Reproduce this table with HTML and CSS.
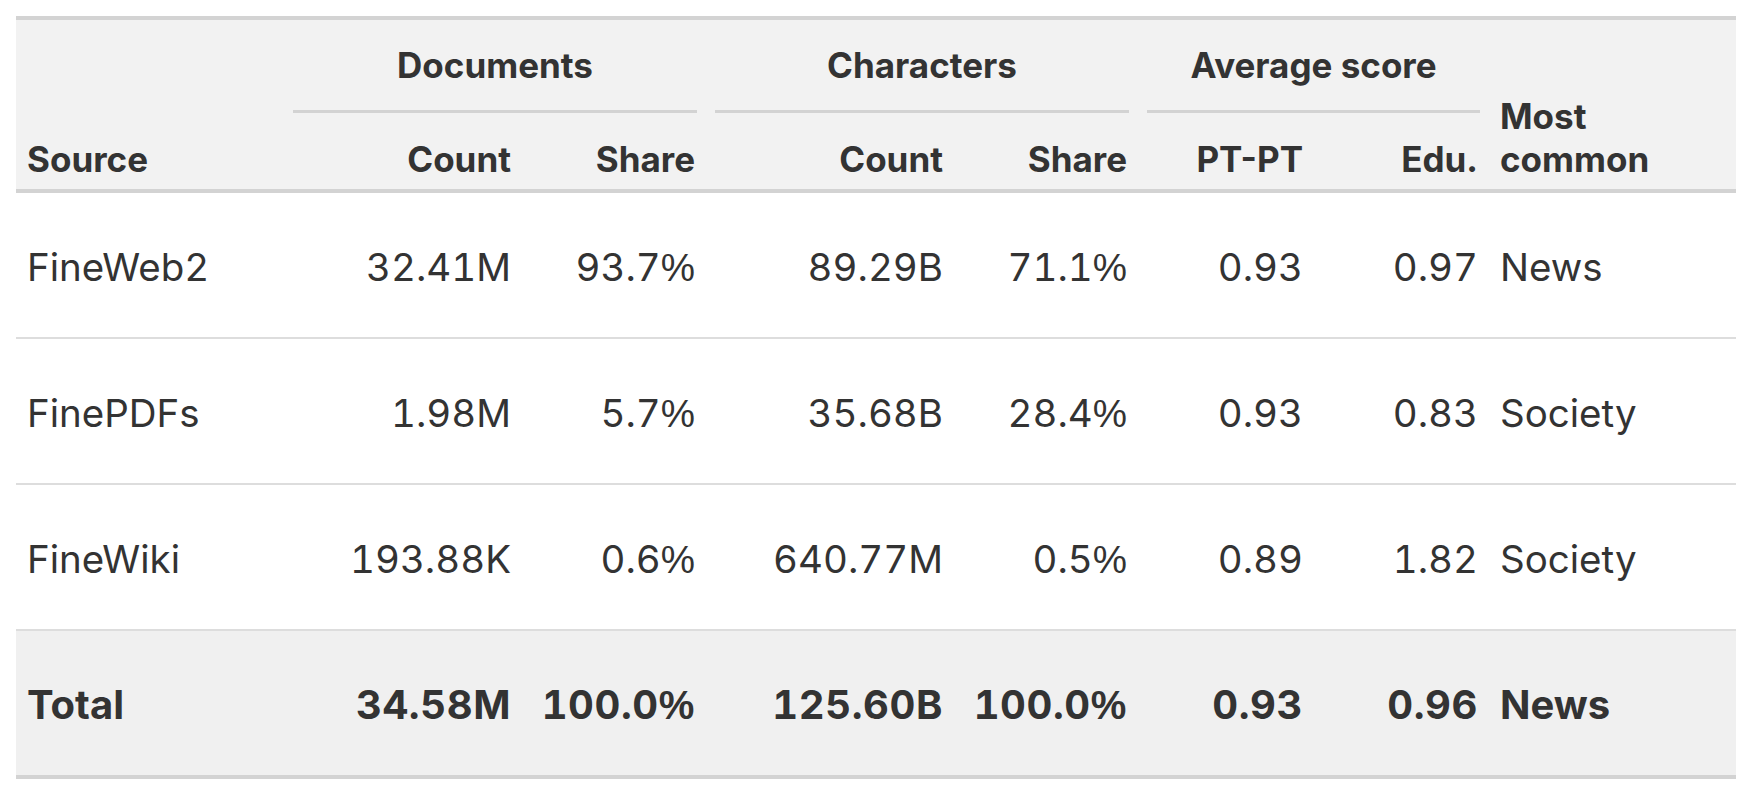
FILE: index.html
```html
<!DOCTYPE html>
<html lang="en">
<head>
<meta charset="utf-8">
<title>Dataset sources</title>
<link rel="stylesheet" href="styles.css">
</head>
<body>
<table class="stats">
  <colgroup>
    <col class="c-src">
    <col class="c-dcount">
    <col class="c-dshare">
    <col class="c-ccount">
    <col class="c-cshare">
    <col class="c-pt">
    <col class="c-edu">
    <col class="c-common">
  </colgroup>
  <thead>
    <tr class="groups">
      <th class="src" rowspan="2">Source</th>
      <th class="grp" colspan="2"><div class="grp-label">Documents</div></th>
      <th class="grp" colspan="2"><div class="grp-label">Characters</div></th>
      <th class="grp" colspan="2"><div class="grp-label">Average score</div></th>
      <th class="common" rowspan="2">Most<br>common</th>
    </tr>
    <tr class="subs">
      <th class="num">Count</th>
      <th class="num">Share</th>
      <th class="num">Count</th>
      <th class="num">Share</th>
      <th class="num">PT-PT</th>
      <th class="num">Edu.</th>
    </tr>
  </thead>
  <tbody>
    <tr>
      <td class="name">FineWeb2</td>
      <td class="num">32.41M</td>
      <td class="num">93.7<span class="pct">%</span></td>
      <td class="num">89.29B</td>
      <td class="num">71.1<span class="pct">%</span></td>
      <td class="num">0.93</td>
      <td class="num">0.97</td>
      <td class="txt">News</td>
    </tr>
    <tr>
      <td class="name">FinePDFs</td>
      <td class="num">1.98M</td>
      <td class="num">5.7<span class="pct">%</span></td>
      <td class="num">35.68B</td>
      <td class="num">28.4<span class="pct">%</span></td>
      <td class="num">0.93</td>
      <td class="num">0.83</td>
      <td class="txt">Society</td>
    </tr>
    <tr>
      <td class="name">FineWiki</td>
      <td class="num">193.88K</td>
      <td class="num">0.6<span class="pct">%</span></td>
      <td class="num">640.77M</td>
      <td class="num">0.5<span class="pct">%</span></td>
      <td class="num">0.89</td>
      <td class="num">1.82</td>
      <td class="txt">Society</td>
    </tr>
  </tbody>
  <tfoot>
    <tr class="total">
      <td class="name">Total</td>
      <td class="num">34.58M</td>
      <td class="num">100.0<span class="pct">%</span></td>
      <td class="num">125.60B</td>
      <td class="num">100.0<span class="pct">%</span></td>
      <td class="num">0.93</td>
      <td class="num">0.96</td>
      <td class="txt">News</td>
    </tr>
  </tfoot>
</table>
</body>
</html>
```

FILE: styles.css
```css
html, body {
  background: #ffffff;
}

body {
  margin: 16px;
  font-family: Inter, "Liberation Sans", Arial, sans-serif;
  color: #333333;
}

.stats {
  width: 100%;
  border-collapse: collapse;
  table-layout: fixed;
}

.c-src { width: 268px; }
.c-dcount { width: 238px; }
.c-dshare { width: 184px; }
.c-ccount { width: 248px; }
.c-cshare { width: 184px; }
.c-pt { width: 176px; }
.c-edu { width: 175px; }
.c-common { width: 247px; }

.stats thead {
  background: #f2f2f2;
  border-top: 4px solid #d3d3d3;
  border-bottom: 4px solid #d3d3d3;
}

.stats th {
  font-size: 35px;
  font-weight: 700;
  line-height: 42px;
  padding: 0 11px;
  white-space: nowrap;
}

.stats th.src,
.stats th.common {
  text-align: left;
  vertical-align: bottom;
  padding-bottom: 9px;
}

.stats th.common {
  line-height: 43px;
  padding-bottom: 8px;
}

.stats th.grp {
  text-align: center;
  vertical-align: top;
  padding-top: 24px;
  padding-bottom: 2px;
}

.grp-label {
  padding-bottom: 24px;
  margin: 0 -2px;
  border-bottom: 3px solid #d3d3d3;
}

.subs th {
  padding-top: 23px;
  padding-bottom: 9px;
}

.stats th.num {
  text-align: right;
}

.stats td {
  font-size: 38.5px;
  height: 141px;
  padding: 3px 11px 0;
  vertical-align: middle;
  white-space: nowrap;
  font-variant-numeric: tabular-nums;
  border-bottom: 2px solid #dddddd;
}

.stats td.name,
.stats td.txt {
  text-align: left;
}

.stats td.num {
  text-align: right;
}

.pct {
  font-family: "Liberation Sans", Arial, sans-serif;
}

.stats tfoot {
  background: #f0f0f0;
  border-top: 2px solid #d3d3d3;
  border-bottom: 4px solid #d3d3d3;
}

.stats tfoot td {
  font-size: 40px;
  font-weight: 700;
  border-bottom: 4px solid #d3d3d3;
}

.stats tfoot td.num {
  letter-spacing: 0.6px;
}
```
